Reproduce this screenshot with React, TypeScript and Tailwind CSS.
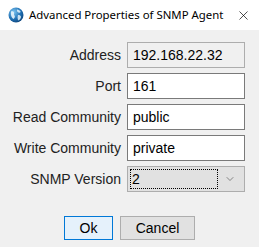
import { ChevronDown, X } from "lucide-react";

function Globe() {
  return (
    <svg width="16" height="16" viewBox="0 0 16 16">
      <defs>
        <radialGradient id="g" cx="0.35" cy="0.3" r="0.8">
          <stop offset="0" stopColor="#7cc4f0" />
          <stop offset="0.6" stopColor="#1f6fb3" />
          <stop offset="1" stopColor="#0d3f73" />
        </radialGradient>
      </defs>
      <circle cx="8" cy="8" r="7.5" fill="url(#g)" />
      <path d="M3 4.5c1.5-.5 2.5 0 3 1s-.5 2 .5 3 0 2.5-1 3.5C4 11 2.5 9 3 4.5z" fill="#e8f4fb" opacity="0.9" />
      <path d="M9 2.5c1.5 0 3 1 3.5 2s-1 1.5-2 1S8.5 4 9 2.5zM10 8c1.5 0 3 .5 3 2s-1.5 3-3 3.5c0-1.5-1-2.5 0-5.5z" fill="#e8f4fb" opacity="0.85" />
    </svg>
  );
}

const rows = [
  { label: "Address", value: "192.168.22.32", readOnly: true },
  { label: "Port", value: "161" },
  { label: "Read Community", value: "public" },
  { label: "Write Community", value: "private" },
];

export default function App() {
  return (
    <div className="w-[259px] h-[247px] bg-[#f0f0f0] font-['Liberation_Sans',Arial,sans-serif] text-black overflow-hidden">
      <div className="h-[30px] bg-white flex items-center pl-2 pr-[8px]">
        <Globe />
        <span className="ml-[5px] text-[11.4px] font-['Noto_Sans',sans-serif] text-black whitespace-nowrap">
          Advanced Properties of SNMP Agent
        </span>
        <X className="ml-auto" size={15} strokeWidth={1.1} />
      </div>
      <div className="grid grid-cols-[121px_118px] gap-x-[6px] gap-y-[5px] pt-[12px] text-[14px]">
        {rows.map((r) => (
          <div key={r.label} className="contents">
            <div className="h-[26px] flex items-center justify-end text-[#222]">{r.label}</div>
            <div
              className={`h-[26px] flex items-center px-[5px] border ${
                r.readOnly ? "bg-[#f0f0f0] border-[#adadad]" : "bg-white border-[#7a7a7a]"
              }`}
            >
              {r.value}
            </div>
          </div>
        ))}
        <div className="h-[26px] flex items-center justify-end text-[#222]">SNMP Version</div>
        <div className="h-[26px] flex items-center border border-[#adadad] bg-[#e1e1e1] p-[2px]">
          <div className="flex-1 h-full flex items-center border border-dotted border-black pl-px">2</div>
          <ChevronDown className="mx-[6px] text-[#444]" size={12} strokeWidth={1.2} />
        </div>
      </div>
      <div className="flex justify-center gap-[7px] mt-[24px] text-[14px]">
        <button className="w-[49px] h-[24px] bg-[#e5f1fb] border border-[#0078d7]">Ok</button>
        <button className="w-[75px] h-[24px] bg-[#e1e1e1] border border-[#adadad]">Cancel</button>
      </div>
    </div>
  );
}
